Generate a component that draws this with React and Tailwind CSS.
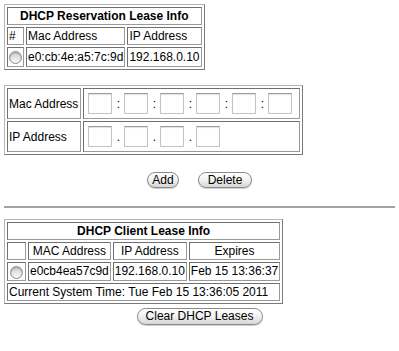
import { useState } from "react";

const cell = "border border-[#9a9a9a] border-t-[#6f6f6f] border-l-[#6f6f6f] p-[1px] align-middle";
const tabela = "border-separate border-spacing-[2px] border border-[#7a7a7a] border-t-[#b5b5b5] border-l-[#b5b5b5]";

function Radio({ checked, onClick }) {
    return (
        <span
            onClick={onClick}
            className="inline-block align-middle w-[13px] h-[13px] rounded-full border border-[#8c8c8c] bg-linear-to-b from-[#cfcfcf] to-[#fbfbfb] shadow-[inset_0_1px_2px_rgba(0,0,0,0.25)]"
        >
            {checked && <span className="block w-[5px] h-[5px] m-[3px] rounded-full bg-[#333]" />}
        </span>
    );
}

function Botao({ children, className }) {
    return (
        <button
            type="button"
            className={"h-[16px] rounded-full border border-[#8a8a8a] bg-linear-to-b from-[#ffffff] via-[#f1f1f1] to-[#d6d6d6] text-[12px] leading-[14px] text-black shadow-[0_1px_1px_rgba(0,0,0,0.2)] " + (className || "")}
        >
            {children}
        </button>
    );
}

function Caixas({ qtd, sep, valores, setValores, prefixo }) {
    return (
        <div className="flex items-center">
            {Array.from({ length: qtd }).map((_, i) => (
                <div key={i} className="flex items-center">
                    {i > 0 && <span className="inline-block w-[12px] text-center text-[12px] leading-[14px]">{sep}</span>}
                    <input
                        type="text"
                        value={valores[i]}
                        onChange={(e) => {
                            const novo = [...valores];
                            novo[i] = e.target.value;
                            setValores(novo);
                        }}
                        name={prefixo + i}
                        className="w-[24px] h-[21px] border border-[#c4c4c4] border-t-[#9c9c9c] bg-white px-[2px] text-[12px] outline-none shadow-[inset_0_1px_1px_rgba(0,0,0,0.12)]"
                    />
                </div>
            ))}
        </div>
    );
}

export default function App() {
    const [mac, setMac] = useState(["", "", "", "", "", ""]);
    const [ip, setIp] = useState(["", "", "", ""]);
    const [sel, setSel] = useState(null);

    return (
        <div className="w-[399px] min-h-[351px] bg-white pt-[4px] font-['Liberation_Sans',Arial,sans-serif] text-[12px] leading-[14px] text-black">
            {/* Reservas */}
            <div className="px-[4px]">
                <table className={tabela}>
                    <tbody>
                        <tr>
                            <td colSpan={3} className={cell + " text-center font-bold"}>DHCP Reservation Lease Info</td>
                        </tr>
                        <tr>
                            <td className={cell}>#</td>
                            <td className={cell}>Mac Address</td>
                            <td className={cell}>IP Address</td>
                        </tr>
                        <tr>
                            <td className={cell + " py-[2px]"}><Radio checked={sel === "r0"} onClick={() => setSel("r0")} /></td>
                            <td className={cell}>e0:cb:4e:a5:7c:9d</td>
                            <td className={cell}>192.168.0.10</td>
                        </tr>
                    </tbody>
                </table>
            </div>

            {/* Formulario */}
            <div className="px-[4px] mt-[15px]">
                <table className={tabela}>
                    <tbody>
                        <tr>
                            <td className={cell + " pr-[2px]"}>Mac Address</td>
                            <td className={cell + " p-[4px] pr-[7px]"}>
                                <Caixas qtd={6} sep=":" valores={mac} setValores={setMac} prefixo="mac" />
                            </td>
                        </tr>
                        <tr>
                            <td className={cell}>IP Address</td>
                            <td className={cell + " p-[4px] pr-[7px]"}>
                                <Caixas qtd={4} sep="." valores={ip} setValores={setIp} prefixo="ip" />
                            </td>
                        </tr>
                    </tbody>
                </table>
            </div>

            <div className="flex justify-center gap-[19px] mt-[17px]">
                <Botao className="w-[32px]">Add</Botao>
                <Botao className="w-[54px]">Delete</Botao>
            </div>

            <div className="mx-[4px] mt-[18px] h-[2px] bg-[#a3a3a3]" />

            {/* Clientes */}
            <div className="px-[4px] mt-[11px]">
                <table className={tabela}>
                    <tbody>
                        <tr>
                            <td colSpan={4} className={cell + " text-center font-bold"}>DHCP Client Lease Info</td>
                        </tr>
                        <tr>
                            <td className={cell + " w-[18px]"}></td>
                            <td className={cell + " text-center"}>MAC Address</td>
                            <td className={cell + " text-center"}>IP Address</td>
                            <td className={cell + " text-center"}>Expires</td>
                        </tr>
                        <tr>
                            <td className={cell + " px-[2px]"}><Radio checked={sel === "c0"} onClick={() => setSel("c0")} /></td>
                            <td className={cell}>e0cb4ea57c9d</td>
                            <td className={cell}>192.168.0.10</td>
                            <td className={cell}>Feb 15 13:36:37</td>
                        </tr>
                        <tr>
                            <td colSpan={4} className={cell}>Current System Time: Tue Feb 15 13:36:05 2011</td>
                        </tr>
                    </tbody>
                </table>
            </div>

            <div className="flex justify-center mt-[4px]">
                <Botao className="w-[126px] h-[17px]">Clear DHCP Leases</Botao>
            </div>
        </div>
    );
}
